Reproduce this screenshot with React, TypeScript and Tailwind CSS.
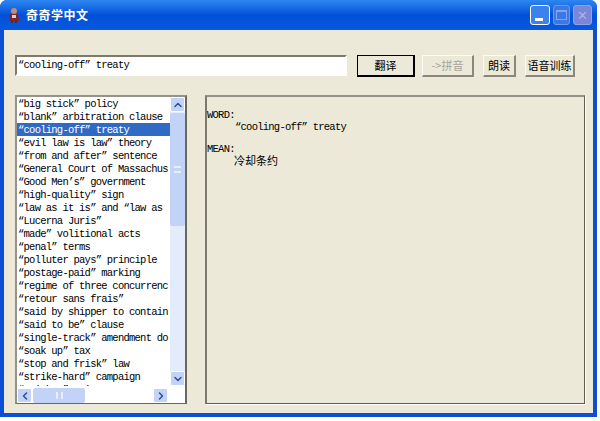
import { ChevronUp, ChevronDown, ChevronLeft, ChevronRight } from 'lucide-react';

const terms = [
    '“big stick” policy',
    '“blank” arbitration clause',
    '“cooling-off” treaty',
    '“evil law is law” theory',
    '“from and after” sentence',
    '“General Court of Massachus',
    '“Good Men’s” government',
    '“high-quality” sign',
    '“law as it is” and “law as',
    '“Lucerna Juris”',
    '“made” volitional acts',
    '“penal” terms',
    '“polluter pays” principle',
    '“postage-paid” marking',
    '“regime of three concurrenc',
    '“retour sans frais”',
    '“said by shipper to contain',
    '“said to be” clause',
    '“single-track” amendment do',
    '“soak up” tax',
    '“stop and frisk” law',
    '“strike-hard” campaign',
    '“sticker” point',
];

const mono = 'font-["Liberation_Mono","Noto_Sans_CJK_SC",monospace] text-[10.5px] tracking-[-0.75px]';
const cjk = 'font-["Noto_Sans_CJK_SC",sans-serif] text-[11px]';
const btnFace = 'flex items-center justify-center h-[22px] bg-[#ece9d8] border-t border-l border-t-[#fbfaf4] border-l-[#fbfaf4] border-r-2 border-b-2 border-r-[#8a887c] border-b-[#8a887c] text-black';

function ScrollBtn({ children }: { children: React.ReactNode }) {
    return (
        <div className="flex h-[15px] w-[15px] shrink-0 items-center justify-center rounded-[2px] border border-white bg-[#c3d3f8] text-[#2f4f90]">
            {children}
        </div>
    );
}

export default function App() {
    return (
        <div className="h-[421px] w-[600px] overflow-hidden bg-white">
            <div className="flex h-[417px] w-[597px] flex-col overflow-hidden rounded-t-[7px] bg-[#0a4fd6]">
                {/* Title bar */}
                <div className="flex h-[30px] shrink-0 items-center bg-gradient-to-b from-[#2f86f0] via-[#0350d8] to-[#0859e0] pl-[7px] pr-[5px]">
                    <svg className="h-[16px] w-[14px] shrink-0" viewBox="0 0 14 16">
                        <circle cx="7" cy="4" r="3" fill="#b89078" />
                        <path d="M3 7h8l1 7H2z" fill="#7a2630" />
                        <path d="M5 8h4v3H5z" fill="#d8d0c8" />
                        <path d="M4 14h2v2H4zM8 14h2v2H8z" fill="#40303a" />
                    </svg>
                    <span className={`font-["Noto_Sans_CJK_SC",sans-serif] text-[12px] ml-[5px] font-bold tracking-[0.5px] text-white`}>奇奇学中文</span>
                    <div className="ml-auto flex gap-[3px]">
                        <div className="flex h-[20px] w-[20px] items-end rounded-[3px] border border-white bg-[#3c82ec] pb-[3px] pl-[4px]">
                            <div className="h-[3px] w-[8px] bg-white" />
                        </div>
                        <div className="flex h-[20px] w-[17px] items-center justify-center rounded-[3px] border border-[#6f9aea] bg-[#3c78e4]">
                            <div className="h-[10px] w-[11px] border border-t-2 border-[#7fa8ee]" />
                        </div>
                        <div className="flex h-[20px] w-[19px] items-center justify-center rounded-[3px] border border-[#8ea4e4] bg-[#7a86d8] text-[13px] leading-none text-[#a8b4e8]">
                            ✕
                        </div>
                    </div>
                </div>

                {/* Client area */}
                <div className="mx-[4px] mb-[4px] flex min-h-0 flex-1 flex-col bg-[#ece9d8] pl-[11px] pr-[7px]">
                    <div className="mt-[25px] flex h-[22px] shrink-0 items-start">
                        <div className={`${mono} flex h-[21px] w-[332px] items-center border-2 border-[#7e7b6e] border-b-white border-r-white bg-white pl-[1px] text-black`}>
                            “cooling-off” treaty
                        </div>
                        <button className={`${btnFace} ${cjk} ml-[10px] w-[58px] !border-black`}>翻译</button>
                        <button className={`${btnFace} ${cjk} ml-[7px] w-[52px] !text-[#a6a498]`}>-&gt;拼音</button>
                        <button className={`${btnFace} ${cjk} ml-[9px] w-[33px]`}>朗读</button>
                        <button className={`${btnFace} ${cjk} ml-[9px] w-[50px] whitespace-nowrap`}>语音训练</button>
                    </div>

                    <div className="mt-[18px] flex h-[309px] shrink-0">
                        {/* Term list */}
                        <div className="flex w-[172px] shrink-0 flex-col border-l-2 border-t-2 border-r-2 border-b border-l-[#96938a] border-t-[#96938a] border-r-[#6a685c] border-b-[#6a685c] bg-white">
                            <div className="flex min-h-0 flex-1">
                                <div className={`${mono} w-[153px] overflow-hidden text-black`}>
                                    {terms.map((term) => (
                                        <div
                                            key={term}
                                            className={`h-[13px] whitespace-nowrap pl-[1px] leading-[15px] ${term.startsWith('“cooling') ? 'bg-[#316ac5] text-white' : ''}`}
                                        >
                                            {term}
                                        </div>
                                    ))}
                                </div>
                                <div className="flex w-[15px] flex-col bg-[#e3ecfd]">
                                    <ScrollBtn><ChevronUp size={12} strokeWidth={3} /></ScrollBtn>
                                    <div className="mt-[1px] flex h-[113px] items-center justify-center rounded-[2px] bg-[#c3d3f8]">
                                        <div className="h-[7px] w-[7px] border-y-2 border-[#e8effd]" />
                                    </div>
                                    <div className="flex-1" />
                                    <ScrollBtn><ChevronDown size={12} strokeWidth={3} /></ScrollBtn>
                                </div>
                            </div>
                            <div className="mt-[2px] flex h-[15px] shrink-0 pr-[17px]">
                                <ScrollBtn><ChevronLeft size={12} strokeWidth={3} /></ScrollBtn>
                                <div className="ml-[1px] flex w-[52px] items-center justify-center rounded-[2px] bg-[#c3d3f8]">
                                    <div className="h-[7px] w-[7px] border-x-2 border-[#e8effd]" />
                                </div>
                                <div className="flex-1" />
                                <ScrollBtn><ChevronRight size={12} strokeWidth={3} /></ScrollBtn>
                            </div>
                        </div>

                        {/* Splitter gap */}
                        <div className="w-[18px] shrink-0" />

                        {/* Result panel */}
                        <div className="flex w-[380px] flex-col border-l-2 border-t-2 border-r border-b border-l-[#7c7a6e] border-t-[#96938a] border-r-[#5f5d52] border-b-[#5f5d52] pt-[12px] shadow-[1px_1px_0_#fff]">
                            <div className={`${mono} leading-[12px] text-black`}>
                                <div>WORD:</div>
                                <div className="pl-[28px]">“cooling-off” treaty</div>
                                <div className="mt-[10px]">MEAN:</div>
                                <div className={`${cjk} pl-[27px] leading-[10px] tracking-normal`}>冷却条约</div>
                            </div>
                        </div>
                    </div>
                </div>
            </div>
        </div>
    );
}
